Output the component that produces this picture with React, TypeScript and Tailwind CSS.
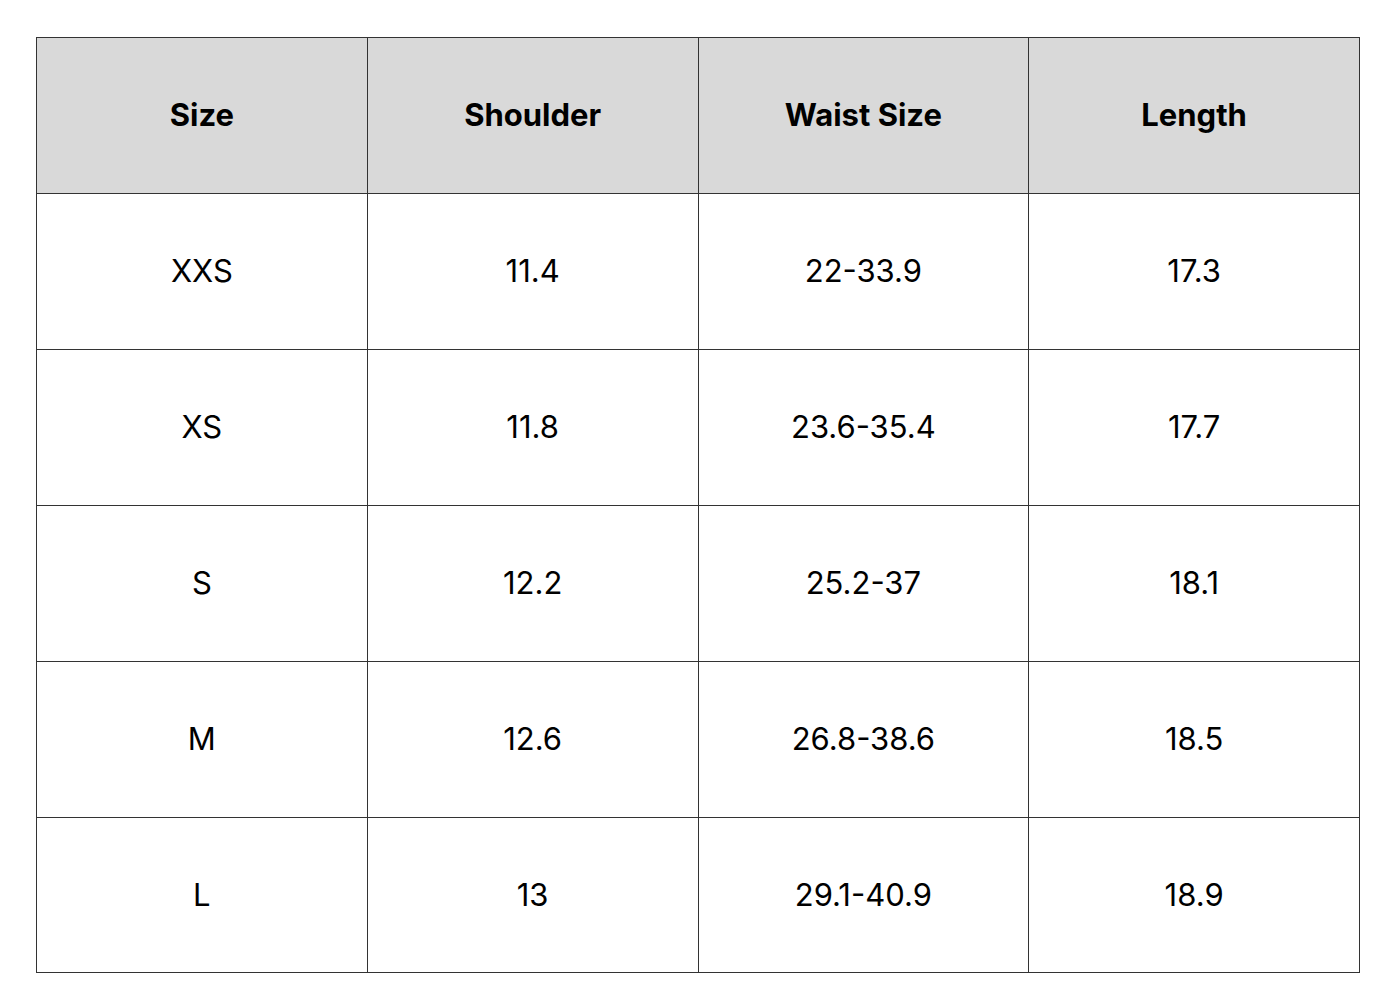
const headers = ["Size", "Shoulder", "Waist Size", "Length"];

const rows = [
  ["XXS", "11.4", "22-33.9", "17.3"],
  ["XS", "11.8", "23.6-35.4", "17.7"],
  ["S", "12.2", "25.2-37", "18.1"],
  ["M", "12.6", "26.8-38.6", "18.5"],
  ["L", "13", "29.1-40.9", "18.9"],
];

export default function App() {
  return (
    <div
      className="w-[1400px] h-[1000px] bg-white pl-[36px] pt-[37px]"
      style={{ fontFamily: "Inter, 'Open Sans', sans-serif" }}
    >
      <table className="w-[1324px] border-collapse table-fixed text-black">
        <thead>
          <tr className="bg-[#d9d9d9]">
            {headers.map((h) => (
              <th
                key={h}
                className="h-[156px] border border-[#333] text-center align-middle text-[31px] font-bold"
              >
                {h}
              </th>
            ))}
          </tr>
        </thead>
        <tbody>
          {rows.map((row, r) => (
            <tr key={row[0]}>
              {row.map((cell, i) => (
                <td
                  key={i}
                  className={`${r === rows.length - 1 ? "h-[155px]" : "h-[156px]"} border border-[#333] text-center align-middle text-[31px] font-normal`}
                >
                  {cell}
                </td>
              ))}
            </tr>
          ))}
        </tbody>
      </table>
    </div>
  );
}
